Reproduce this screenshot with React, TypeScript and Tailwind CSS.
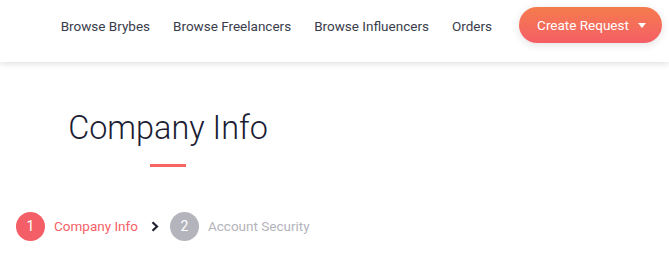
import React from "react";

export default function App() {
  return (
    <div className="w-[669px] h-[254px] bg-white overflow-hidden" style={{ fontFamily: "Roboto, 'Liberation Sans', sans-serif" }}>
      <header className="h-[62px] bg-white shadow-[0_2px_6px_rgba(0,0,0,0.12)] flex items-start justify-end pr-[7px] pt-[7px] relative z-10">
        <nav className="h-[36px] flex items-center gap-[23px] text-[13.5px] text-[#3a3c4c] pt-[2px]">
          <span>Browse Brybes</span>
          <span>Browse Freelancers</span>
          <span>Browse Influencers</span>
          <span>Orders</span>
        </nav>
        <button className="ml-[27px] h-[36px] w-[143px] rounded-full bg-gradient-to-b from-[#f57b4c] to-[#f45e65] text-white text-[13.5px] flex items-center justify-center gap-[9px] pl-[2px] shadow-[0_2px_8px_rgba(0,0,0,0.12)]">
          <span>Create Request</span>
          <svg width="8" height="5" viewBox="0 0 8 5"><path d="M0 0h8L4 5z" fill="white" /></svg>
        </button>
      </header>
      <main>
        <div className="w-[336px] flex flex-col items-center pt-[46px]">
          <h1 className="text-[32.4px] font-light text-[#1b1d33] leading-[40px]">Company Info</h1>
          <div className="mt-[16px] w-[36px] h-[3px] bg-[#f76464]" />
        </div>
        <div className="flex items-center pl-[16px] mt-[45px] text-[13.5px]">
          <div className="w-[29px] h-[29px] rounded-full bg-[#f45f67] text-white flex items-center justify-center text-[14px]">1</div>
          <span className="ml-[9px] text-[#f45f67]">Company Info</span>
          <svg className="ml-[13px]" width="8" height="11" viewBox="0 0 8 11"><path d="M1.5 1.2L6 5.5L1.5 9.8" stroke="#1f2130" strokeWidth="2.2" fill="none" /></svg>
          <div className="ml-[11px] w-[29px] h-[29px] rounded-full bg-[#b4b4bc] text-white flex items-center justify-center text-[14px]">2</div>
          <span className="ml-[9px] text-[#b3b3bb]">Account Security</span>
        </div>
      </main>
    </div>
  );
}
